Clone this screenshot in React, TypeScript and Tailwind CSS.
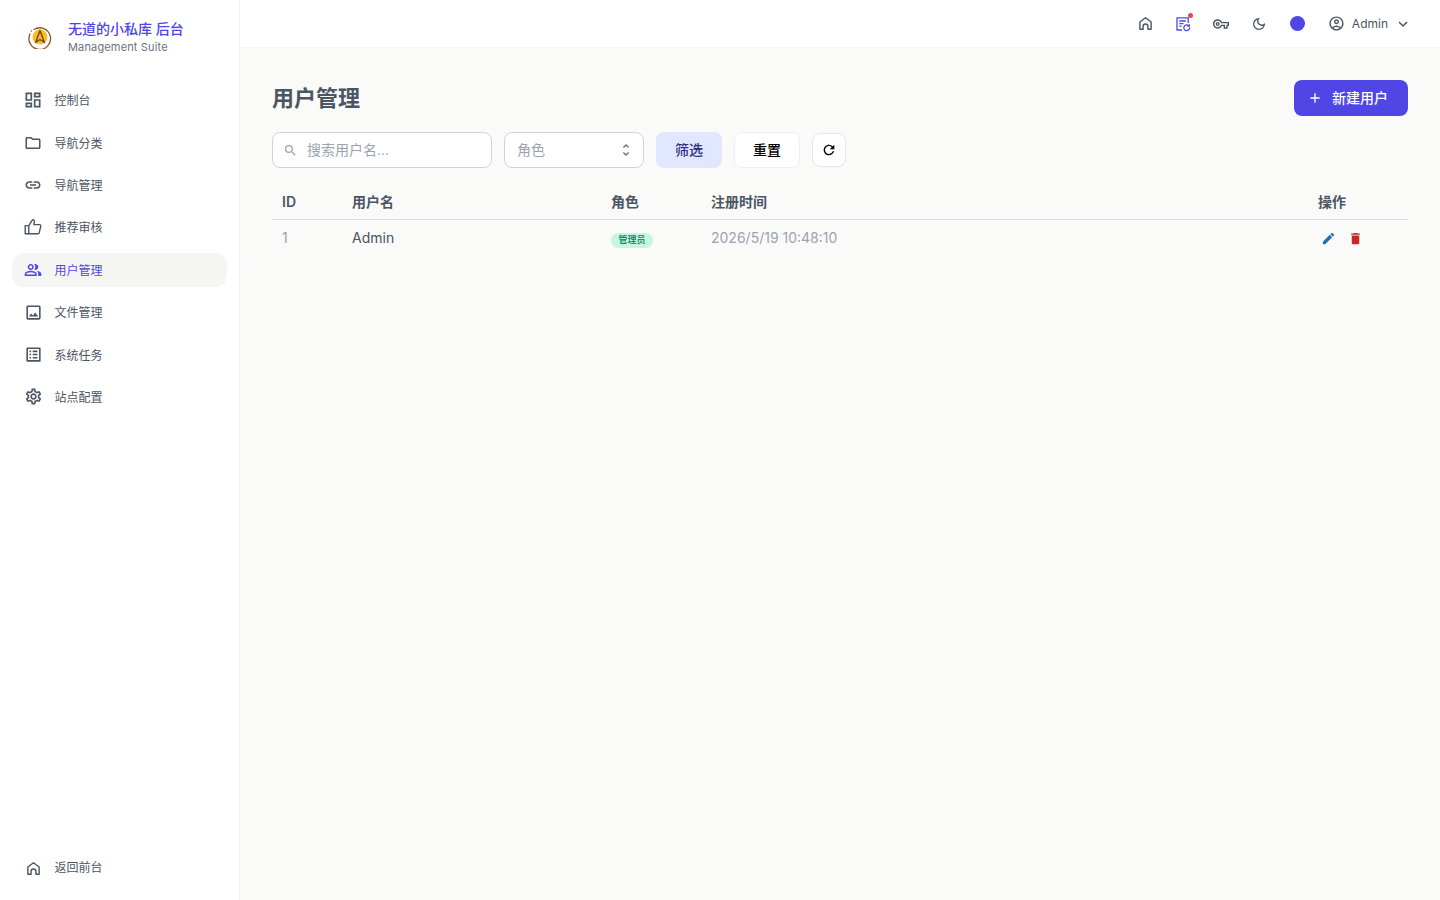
import {
  MdOutlineDashboard, MdOutlineFolder, MdOutlineLink, MdOutlinePeopleAlt,
  MdOutlineImage, MdOutlineListAlt, MdOutlineSettings, MdOutlineVpnKey, MdOutlineDarkMode,
  MdOutlineAccountCircle, MdExpandMore, MdAdd, MdRefresh, MdEdit, MdDelete, MdSearch, MdUnfoldMore,
} from "react-icons/md"

const font = "font-['Inter','Noto_Sans_CJK_SC',sans-serif]"

function ThumbIcon({ size = 18 }: { size?: number }) {
  return (
    <svg width={size} height={size} viewBox="0 0 18 18" fill="none" stroke="currentColor" strokeWidth="1.4" strokeLinejoin="round">
      <path d="M1.2 7.6h3.6v8.2H1.2z" />
      <path d="M4.8 7.6 8.6 1.6c1.2 0 2 .9 1.8 2.1L9.9 6.6h5.6c.9 0 1.5.8 1.3 1.6l-1.6 6.5c-.2.7-.7 1.1-1.4 1.1H4.8" />
    </svg>
  )
}

function HomeIcon({ size = 16 }: { size?: number }) {
  return (
    <svg width={size} height={size} viewBox="0 0 16 16" fill="none" stroke="currentColor" strokeWidth="1.5" strokeLinejoin="round">
      <path d="M2 14.2V6.4L8 1.8l6 4.6v7.8h-3.4v-3.1a2.6 2.6 0 0 0-5.2 0v3.1z" />
    </svg>
  )
}

const navItems = [
  { label: "控制台", icon: <MdOutlineDashboard size={20} /> },
  { label: "导航分类", icon: <MdOutlineFolder size={18} /> },
  { label: "导航管理", icon: <MdOutlineLink size={18} /> },
  { label: "推荐审核", icon: <ThumbIcon /> },
  { label: "用户管理", icon: <MdOutlinePeopleAlt size={18} />, active: true },
  { label: "文件管理", icon: <MdOutlineImage size={19} /> },
  { label: "系统任务", icon: <MdOutlineListAlt size={19} /> },
  { label: "站点配置", icon: <MdOutlineSettings size={19} /> },
]

function Logo() {
  return (
    <svg width="24" height="24" viewBox="0 0 24 24" fill="none">
      <circle cx="12" cy="12" r="7.5" fill="#fbbf24" />
      <path d="M6 4.5A10.8 10.8 0 1 1 2 9" stroke="#8a5a2b" strokeWidth="1.3" strokeLinecap="round" />
      <circle cx="3.4" cy="6" r="0.8" fill="#8a5a2b" />
      <path d="M12 5.5 7.6 17.5 12 14.5 16.4 17.5Z" stroke="#7c4a1e" strokeWidth="1.5" strokeLinejoin="round" />
    </svg>
  )
}

function TaskIcon() {
  return (
    <svg width="16" height="16" viewBox="0 0 16 16" fill="none" stroke="#4f46e5" strokeWidth="1.3">
      <path d="M7 14H2V1.8h11.2V7" />
      <path d="M4.3 5h6.6M4.3 7.6h4.2M4.3 10.2h2.4" />
      <path d="M14.6 11.8a2.9 2.9 0 1 1-1-2.2" strokeLinecap="round" />
      <path d="M14.2 8.2v1.8h-1.8" />
    </svg>
  )
}

export default function App() {
  return (
    <div className={`flex h-screen w-full overflow-hidden bg-[#fafaf9] text-[#4b5563] ${font}`}>
      <aside className="flex w-[240px] shrink-0 flex-col border-r border-[#f3f4f6] bg-white pb-[15px]">
        <div className="flex h-[74px] items-center gap-4 pl-[28px]">
          <Logo />
          <div className="flex flex-col">
            <span className="text-sm leading-[20px] font-medium text-[#4f46e5]">无道的小私库 后台</span>
            <span className="text-[11px] leading-[16px] tracking-[0.15px] text-[#6b7280]">Management Suite</span>
          </div>
        </div>
        <nav className="mt-[9px] flex flex-col gap-[8px] px-3">
          {navItems.map((item) => (
            <a
              key={item.label}
              className={`flex h-[34.4px] items-center rounded-xl text-xs ${item.active ? "bg-[#f5f5f4] text-[#4f46e5]" : "text-[#4b5563]"}`}
            >
              <span className="flex w-[42.5px] justify-center">{item.icon}</span>
              <span className="pt-[2px]">{item.label}</span>
            </a>
          ))}
        </nav>
        <a className="mt-auto flex h-[34px] items-center pl-[12px] text-xs text-[#4b5563]">
          <span className="flex w-[42.5px] justify-center">
            <HomeIcon size={15} />
          </span>
          返回前台
        </a>
      </aside>

      <div className="flex min-w-0 flex-1 flex-col">
        <header className="flex h-[48px] shrink-0 items-center justify-end gap-[22px] border-b border-[#f5f5f4] bg-white pr-[28px]">
          <HomeIcon size={15} />
          <span className="relative flex">
            <TaskIcon />
            <span className="absolute -top-[3px] -right-[2px] h-[5px] w-[5px] rounded-full bg-[#ef4444]" />
          </span>
          <MdOutlineVpnKey size={16} />
          <MdOutlineDarkMode size={16} />
          <span className="ml-[1px] h-[15px] w-[15px] rounded-full bg-[#4f46e5]" />
          <div className="ml-[1px] flex items-center gap-[7px] text-xs">
            <MdOutlineAccountCircle size={17} />
            <span>Admin</span>
            <MdExpandMore size={18} className="-ml-[1px]" />
          </div>
        </header>

        <main className="flex flex-1 flex-col px-8 pt-8">
          <div className="flex h-[36px] items-center justify-between">
            <h1 className="text-[22px] font-semibold text-[#4b5563]">用户管理</h1>
            <button className="flex h-[36px] w-[114px] items-center gap-[9px] rounded-lg bg-[#4f46e5] pl-[13px] text-sm font-medium text-white">
              <MdAdd size={16} />
              新建用户
            </button>
          </div>

          <div className="mt-4 flex items-center gap-3">
            <div className="flex h-[36px] w-[220px] items-center gap-[9px] rounded-lg border border-[#d1d5db] bg-white pl-[10px] text-sm text-[#9ca3af]">
              <MdSearch size={15} />
              搜索用户名...
            </div>
            <div className="flex h-[36px] w-[140px] items-center justify-between rounded-lg border border-[#d1d5db] bg-white pr-[9px] pl-3 text-sm text-[#9ca3af]">
              角色
              <MdUnfoldMore size={16} className="text-[#6b7280]" />
            </div>
            <button className="h-[36px] w-[66px] rounded-lg bg-[#e0e7ff] text-sm font-medium text-[#312e81]">筛选</button>
            <button className="h-[36px] w-[66px] rounded-lg border border-[#f0f0f0] bg-white text-sm font-medium text-black">重置</button>
            <button className="flex h-[34px] w-[34px] items-center justify-center rounded-lg border border-[#e5e7eb] bg-white text-black">
              <MdRefresh size={16} />
            </button>
          </div>

          <table className="mt-[16px] w-full table-fixed border-collapse text-left text-sm">
            <thead>
              <tr className="h-[35px] border-b border-[#d9dbe1] text-[#4b5563]">
                <th className="w-[80px] pt-[2px] pl-[10px] font-semibold">ID</th>
                <th className="w-[259px] pt-[2px] font-semibold">用户名</th>
                <th className="w-[100px] pt-[2px] font-semibold">角色</th>
                <th className="pt-[2px] font-semibold">注册时间</th>
                <th className="w-[90px] pt-[2px] font-semibold">操作</th>
              </tr>
            </thead>
            <tbody>
              <tr className="h-[37px]">
                <td className="pt-[1px] pl-[10px] text-[#9ca3af]">1</td>
                <td className="pt-[1px] text-[#4b5563]">Admin</td>
                <td>
                  <span className="mt-[4px] inline-flex h-[15px] w-[42px] items-center justify-center rounded-full bg-[#c4f7e0] text-[9px] font-medium text-[#047857]">管理员</span>
                </td>
                <td className="pt-[1px] text-[#9ca3af]">2026/5/19 10:48:10</td>
                <td className="pt-[1px]">
                  <div className="flex items-center gap-[12px] pl-[3px]">
                    <MdEdit size={15} className="text-[#1d6fb8]" />
                    <MdDelete size={15} className="text-[#c62828]" />
                  </div>
                </td>
              </tr>
            </tbody>
          </table>
        </main>
      </div>
    </div>
  )
}
